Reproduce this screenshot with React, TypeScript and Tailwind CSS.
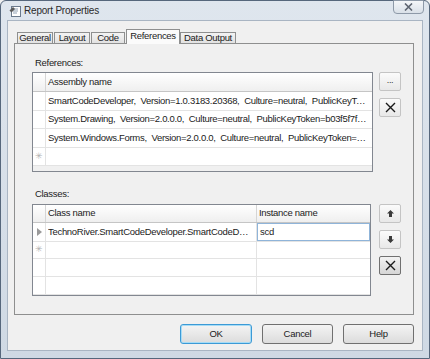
import React from "react"

const font = { fontFamily: '"Liberation Sans", Arial, sans-serif' }

function XIcon() {
  return (
    <svg width="11" height="11" viewBox="0 0 11 11">
      <path d="M1 1L10 10M10 1L1 10" stroke="#1a1a1a" strokeWidth="1.4" />
    </svg>
  )
}

function SideButton({ children, dark }: { children: React.ReactNode; dark?: boolean }) {
  return (
    <div
      className={
        "w-[22px] h-[19px] rounded-[2px] border flex items-center justify-center " +
        (dark
          ? "border-[#707070] bg-gradient-to-b from-[#f2f2f2] to-[#d6d6d6]"
          : "border-[#c4c4c4] bg-gradient-to-b from-[#fbfbfb] to-[#e8e8e8]")
      }
    >
      {children}
    </div>
  )
}

function RowHead({ kind }: { kind?: "star" | "arrow" }) {
  return (
    <div className="w-[13px] shrink-0 h-full border-r border-[#e3e3e3] flex items-center justify-center bg-white">
      {kind === "star" && <span className="text-[9px] leading-none text-[#b0b0b0]">✳</span>}
      {kind === "arrow" && (
        <svg width="5" height="8" viewBox="0 0 5 8">
          <path d="M0 0L5 4L0 8Z" fill="#9a9a9a" />
        </svg>
      )}
    </div>
  )
}

const refs = [
  "SmartCodeDeveloper,  Version=1.0.3183.20368,  Culture=neutral,  PublicKeyToken=null",
  "System.Drawing,  Version=2.0.0.0,  Culture=neutral,  PublicKeyToken=b03f5f7f11d50a3a",
  "System.Windows.Forms,  Version=2.0.0.0,  Culture=neutral,  PublicKeyToken=b77a5c561934e089",
]

const tabBase =
  "h-[11px] border border-b-0 border-[#8e8f8f] bg-gradient-to-b from-[#f3f3f3] to-[#e2e2e2] flex items-center justify-center leading-none"

export default function App() {
  return (
    <div
      className="w-[430px] h-[359px] bg-[#f0f0f0] overflow-hidden text-[9.5px] tracking-[-0.3px] text-[#1b1b1b]"
      style={font}
    >
      <div className="w-full h-full flex flex-col rounded-t-[6px] border border-[#56677c] bg-gradient-to-b from-[#dfe6ee] to-[#cfd9e4]">
        {/* Title bar */}
        <div className="h-[19px] shrink-0 flex items-start pl-[8px] pr-[5px]">
          <svg width="14" height="14" viewBox="0 0 14 14" className="mt-[3px]">
            <rect x="2.5" y="2.5" width="9" height="10" fill="#fff" stroke="#6b7b8e" />
            <path d="M4 5h5M4 7h5M4 9h4" stroke="#8fa0b3" />
            <path d="M0.5 6.5L4 3L6 5L2.5 8.5Z" fill="#5b5b5b" />
          </svg>
          <span className="ml-[1px] mt-[5px] text-[10px] tracking-[-0.2px] leading-none text-[#2a2a2a]">
            Report Properties
          </span>
          <div className="ml-auto w-[31px] h-[14px] -mt-px rounded-b-[4px] border border-[#8d99a8] bg-gradient-to-b from-[#f4f6f9] to-[#d9e0e8] flex items-center justify-center">
            <svg width="9" height="8" viewBox="0 0 9 8">
              <path d="M1 0.5L8 7.5M8 0.5L1 7.5" stroke="#5d6470" strokeWidth="1.6" />
            </svg>
          </div>
        </div>

        {/* Client area */}
        <div className="flex-1 mx-[6px] mb-[7px] bg-[#f0f0f0] border border-[#a9b5c3] flex flex-col pl-[6px] pr-[8px]">
          {/* Tabs */}
          <div className="flex items-end h-[22px] pl-[3px]">
            <div className={tabBase + " w-[36px] mr-px"}>General</div>
            <div className={tabBase + " w-[36px] mr-px"}>Layout</div>
            <div className={tabBase + " w-[34px] mr-px"}>Code</div>
            <div className="relative z-10 w-[54px] h-[15px] mb-[-1px] border border-b-0 border-[#8e8f8f] bg-[#fbfbfb] flex items-center justify-center leading-none pb-[2px]">
              References
            </div>
            <div className={tabBase + " w-[56px]"}>Data Output</div>
          </div>

          {/* Tab panel */}
          <div className="h-[272px] border border-[#8e8f8f] bg-[#f0f0f0] pl-[17px]">
            <div className="mt-[10px] ml-[3px] h-[17px] leading-[17px]">References:</div>
            <div className="flex mt-px">
              <div className="w-[341px] h-[100px] border border-[#828790] bg-[#f0f0f0] flex flex-col">
                <div className="h-[19px] flex border-b border-[#c5c5c5] bg-gradient-to-b from-[#ffffff] to-[#efefef]">
                  <div className="w-[13px] border-r border-[#d5d5d5]" />
                  <div className="pl-[2px] flex items-center">Assembly name</div>
                </div>
                {refs.map((r) => (
                  <div key={r} className="h-[18.5px] flex border-b border-[#e3e3e3] bg-white">
                    <RowHead />
                    <div className="flex-1 min-w-0 pl-[2px] pr-[2px] flex items-center">
                      <span className="block whitespace-pre overflow-hidden text-ellipsis">{r}</span>
                    </div>
                  </div>
                ))}
                <div className="h-[18px] flex border-b border-[#e3e3e3] bg-white">
                  <RowHead kind="star" />
                  <div className="flex-1" />
                </div>
              </div>
              <div className="ml-[6px] flex flex-col gap-[7px]">
                <SideButton>
                  <span className="text-[9px] leading-none -mt-[3px] text-[#333]">...</span>
                </SideButton>
                <SideButton>
                  <XIcon />
                </SideButton>
              </div>
            </div>

            <div className="mt-[13px] ml-[3px] h-[17px] leading-[17px]">Classes:</div>
            <div className="flex mt-[2px]">
              <div className="w-[339px] h-[92px] border border-[#828790] bg-white flex flex-col">
                <div className="h-[18px] flex border-b border-[#c5c5c5] bg-gradient-to-b from-[#ffffff] to-[#efefef]">
                  <div className="w-[13px] border-r border-[#d5d5d5]" />
                  <div className="w-[211px] pl-[2px] flex items-center border-r border-[#d5d5d5]">Class name</div>
                  <div className="flex-1 pl-[2px] flex items-center">Instance name</div>
                </div>
                <div className="h-[19px] flex border-b border-[#e3e3e3]">
                  <RowHead kind="arrow" />
                  <div className="w-[211px] min-w-0 pl-[2px] pr-[3px] flex items-center border-r border-[#e3e3e3]">
                    <span className="block whitespace-pre overflow-hidden text-ellipsis">
                      TechnoRiver.SmartCodeDeveloper.SmartCodeDeveloper
                    </span>
                  </div>
                  <div className="flex-1 border border-[#8fb4d9] pl-[2px] flex items-center">scd</div>
                </div>
                {["star", "", ""].map((k, i) => (
                  <div key={i} className="h-[18px] flex border-b border-[#e3e3e3]">
                    <RowHead kind={k === "star" ? "star" : undefined} />
                    <div className="w-[211px] border-r border-[#e3e3e3]" />
                    <div className="flex-1" />
                  </div>
                ))}
              </div>
              <div className="ml-[8px] flex flex-col gap-[7px]">
                <SideButton>
                  <svg width="7" height="7" viewBox="0 0 7 7">
                    <path d="M3.5 0L7 3.5H5V7H2V3.5H0Z" fill="#3a3a3a" />
                  </svg>
                </SideButton>
                <SideButton>
                  <svg width="7" height="7" viewBox="0 0 7 7">
                    <path d="M3.5 7L7 3.5H5V0H2V3.5H0Z" fill="#3a3a3a" />
                  </svg>
                </SideButton>
                <SideButton dark>
                  <XIcon />
                </SideButton>
              </div>
            </div>
          </div>

          {/* Dialog buttons */}
          <div className="flex justify-end gap-[10px] mt-[9px]">
            <button className="w-[72px] h-[20px] rounded-[3px] border border-[#3c9ad6] bg-gradient-to-b from-[#f4f4f4] to-[#dcdcdc] leading-none shadow-[inset_0_0_0_1px_#a6dcf6]">
              OK
            </button>
            <button className="w-[71px] h-[20px] rounded-[3px] border border-[#707070] bg-gradient-to-b from-[#f4f4f4] to-[#dcdcdc] leading-none">
              Cancel
            </button>
            <button className="w-[71px] h-[20px] rounded-[3px] border border-[#707070] bg-gradient-to-b from-[#f4f4f4] to-[#dcdcdc] leading-none">
              Help
            </button>
          </div>
        </div>
      </div>
    </div>
  )
}
